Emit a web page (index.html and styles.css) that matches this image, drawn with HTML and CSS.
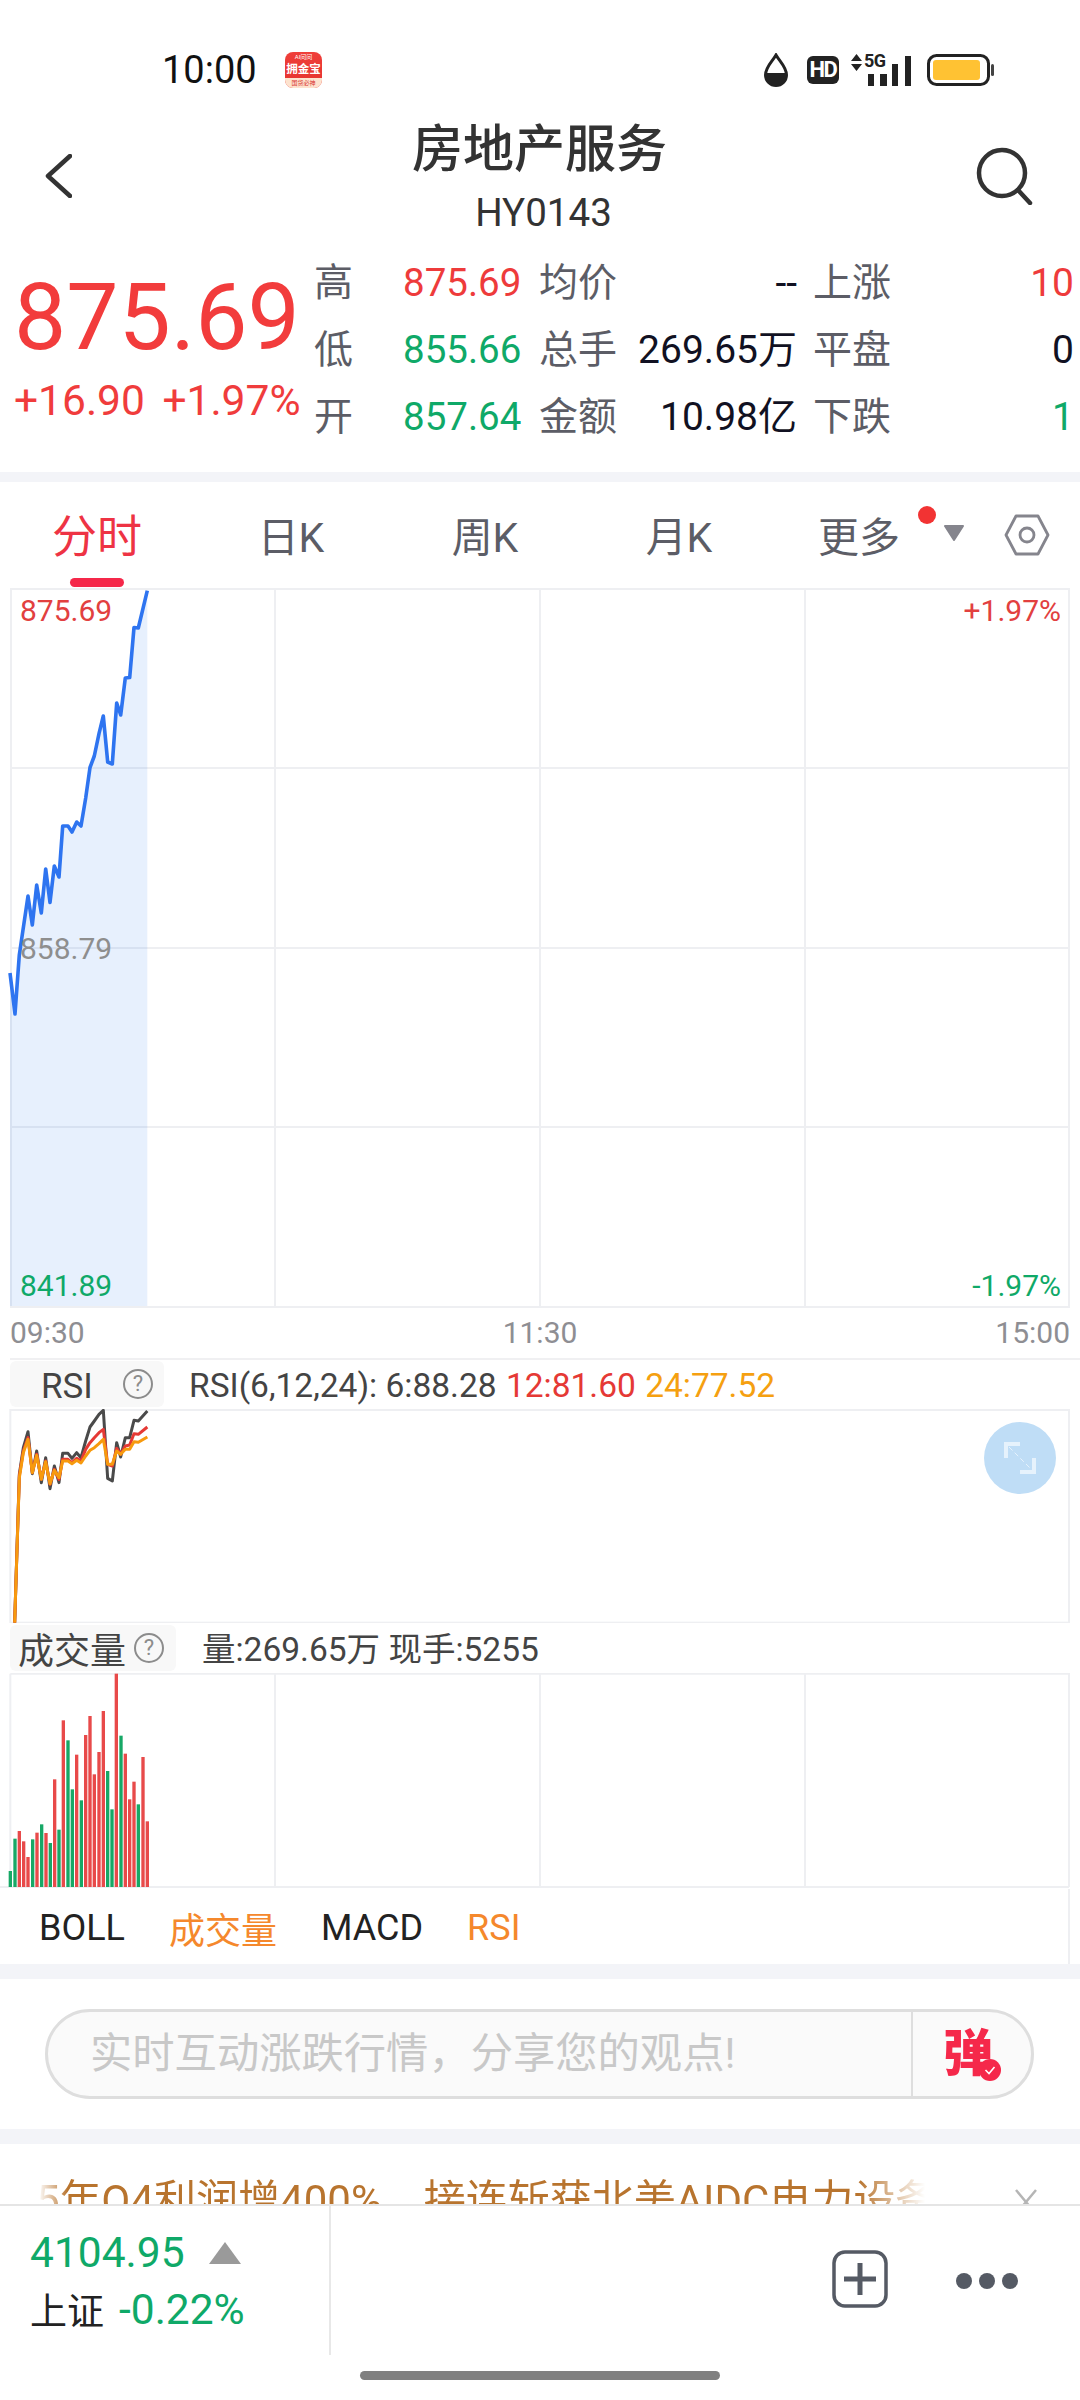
FILE: index.html
```html
<!DOCTYPE html>
<html lang="zh-CN">
<head>
<meta charset="utf-8">
<title>房地产服务</title>
<link rel="stylesheet" href="styles.css">
</head>
<body>
<div class="page">
  <div class="status">
    <span class="time">10:00</span>
    <div class="appicon"><span class="ai">AI问问</span><span class="appname">拥金宝</span><span class="appfoot">国货必神</span></div>
    <div class="sysicons">
      <svg class="drop" width="26" height="34" viewBox="0 0 26 34"><path d="M13 2 C9 9 2.500 14 2.500 22 a10.500 10.500 0 0 0 21 0 C23.500 14 17 9 13 2Z" fill="#fff" stroke="#222" stroke-width="3"/><path d="M2.500 20 h21 v2 a10.500 10.500 0 0 1 -21 0Z" fill="#222"/></svg>
      <span class="hd">HD</span>
      <div class="net">
        <svg class="arrows" width="11" height="17" viewBox="0 0 11 17"><path d="M5.500 0 L11 7 H0Z M5.500 17 L11 10 H0Z" fill="#222"/></svg>
        <span class="fiveg">5G</span>
        <svg class="bars" width="44" height="31" viewBox="0 0 44 31"><path d="M1 19h6v12H1Z M13 19h7v12h-7Z M25 9h6v22h-6Z M38 1h6v30h-6Z" fill="#222"/></svg>
      </div>
      <svg class="battery" width="67" height="32" viewBox="0 0 67 32"><rect x="1.500" y="1.500" width="60" height="29" rx="8" fill="#fff" stroke="#222" stroke-width="3"/><rect x="6" y="6" width="47" height="20" rx="3" fill="#ffc233"/><rect x="64" y="10" width="3" height="12" rx="1.500" fill="#444"/></svg>
    </div>
  </div>

  <header class="head">
    <svg class="back" width="27" height="44" viewBox="0 0 27 44"><path d="M25 2 L3 22 L25 42" fill="none" stroke="#333" stroke-width="4.500" stroke-linecap="round" stroke-linejoin="round"/></svg>
    <div class="titles">
      <h1 class="title">房地产服务</h1>
      <div class="code">HY0143</div>
    </div>
    <svg class="search" width="58" height="58" viewBox="0 0 58 58"><circle cx="26" cy="26" r="23" fill="none" stroke="#333" stroke-width="4.500"/><path d="M42 43 L54 56" fill="none" stroke="#333" stroke-width="4.500" stroke-linecap="round"/></svg>
  </header>

  <section class="quote">
    <div class="price">
      <div class="big">875.69</div>
      <div class="change">+16.90 +1.97%</div>
    </div>
    <div class="qgrid">
      <span class="lb">高</span><span class="up">875.69</span><span class="lb">均价</span><span class="val">--</span><span class="lb lb3">上涨</span><span class="val up">10</span>
      <span class="lb">低</span><span class="down">855.66</span><span class="lb">总手</span><span class="val">269.65万</span><span class="lb lb3">平盘</span><span class="val">0</span>
      <span class="lb">开</span><span class="down">857.64</span><span class="lb">金额</span><span class="val">10.98亿</span><span class="lb lb3">下跌</span><span class="val down">1</span>
    </div>
  </section>

  <div class="band"></div>

  <nav class="tabs">
    <div class="tab active"><span>分时</span><i class="underline"></i></div>
    <div class="tab">日K</div>
    <div class="tab">周K</div>
    <div class="tab">月K</div>
    <div class="tab more">更多<i class="dot"></i><svg class="caret" width="22" height="16" viewBox="0 0 22 16"><path d="M2 1 H20 L11 15Z" fill="#85858d" stroke="#85858d" stroke-width="2" stroke-linejoin="round"/></svg></div>
    <svg class="hex" width="46" height="42" viewBox="0 0 46 42"><path d="M12 2 H34 L44 21 L34 40 H12 L2 21Z" fill="none" stroke="#85858d" stroke-width="2.800" stroke-linejoin="round"/><circle cx="23" cy="21" r="7" fill="none" stroke="#85858d" stroke-width="2.800"/></svg>
  </nav>

  <svg class="chart" width="1080" height="720" viewBox="0 588 1080 720">
    <rect class="frame" x="11" y="589" width="1058" height="718"/>
    <path class="grid" d="M275 589V1307 M540 589V1307 M805 589V1307 M11 768H1069 M11 948H1069 M11 1127H1069"/>
    <polygon class="area" points="10,973 15,1014 19.300,955 28,896 32.300,925 36.700,885 41.300,913 45.700,869 50,902.500 54.300,866 59,877 62.700,826 68,826 72,832 76.700,822 81,826 85.700,798 90,767.500 94.300,756 99,733.600 103.300,716 107.700,762 112.300,764 116.700,703 120.700,715 125.300,678 129.700,677.500 134,627.500 138.300,628 147.300,590.700 147.300,1306 10,1306"/>
    <polyline class="price-line" points="10,973 15,1014 19.300,955 28,896 32.300,925 36.700,885 41.300,913 45.700,869 50,902.500 54.300,866 59,877 62.700,826 68,826 72,832 76.700,822 81,826 85.700,798 90,767.500 94.300,756 99,733.600 103.300,716 107.700,762 112.300,764 116.700,703 120.700,715 125.300,678 129.700,677.500 134,627.500 138.300,628 147.300,590.700"/>
    <text class="axis t-up" x="20" y="621">875.69</text>
    <text class="axis t-mid" x="20" y="959">858.79</text>
    <text class="axis t-down" x="20" y="1296">841.89</text>
    <text class="axis t-up end" x="1061" y="621">+1.97%</text>
    <text class="axis t-down end" x="1061" y="1296">-1.97%</text>
  </svg>

  <div class="timeaxis"><span>09:30</span><span>11:30</span><span>15:00</span></div>

  <div class="ind-head rsi-head">
    <div class="ind-tab rsi-tab"><span class="rsi-name">RSI</span><svg class="help" width="32" height="32" viewBox="0 0 32 32"><circle cx="16" cy="16" r="14" fill="none" stroke="#8c8c8c" stroke-width="2"/><text x="16" y="23" class="help-q">?</text></svg></div>
    <div class="ind-text">RSI(6,12,24): 6:88.28 <span class="c-red">12:81.60</span> <span class="c-orange">24:77.52</span></div>
  </div>

  <div class="rsi-wrap">
    <svg class="rsi" width="1080" height="214" viewBox="0 324 3240 642">
      <rect class="frame-z" x="31" y="327" width="3176" height="638"/>
      <polyline class="rl r-grey" points="44,965 58,520 70,440 84,392 97,518 110,450 124,545 137,470 150,563 163,495 177,545 188,457 204,457 216,472 230,455 243,470 257,420 270,378 283,360 297,340 310,328 323,532 337,540 350,425 362,468 376,410 389,410 402,358 415,360 442,330"/>
      <polyline class="rl r-red" points="44,965 58,525 70,450 84,410 97,515 110,460 124,535 137,480 150,550 163,505 177,535 188,475 204,475 216,485 230,472 243,480 257,445 270,425 283,410 297,395 310,385 323,490 337,495 350,442 362,460 376,435 389,432 402,398 415,400 442,378"/>
      <polyline class="rl r-orange" points="44,965 58,530 70,455 84,415 97,515 110,463 124,535 137,482 150,548 163,508 177,530 188,480 204,480 216,488 230,478 243,486 257,465 270,448 283,440 297,428 310,415 323,490 337,490 350,450 362,460 376,445 389,445 402,422 415,424 442,408"/>
    </svg>
    <div class="expand"><svg width="32" height="32" viewBox="0 0 32 32"><path d="M2 16V2H16 M30 16V30H16" fill="none" stroke="#e6f2fc" stroke-width="4"/><path d="M5 5 L27 27" fill="none" stroke="#e6f2fc" stroke-width="1" stroke-dasharray="5 3"/></svg></div>
  </div>

  <div class="ind-head vol-head">
    <div class="ind-tab vol-tab"><span>成交量</span><svg class="help" width="32" height="32" viewBox="0 0 32 32"><circle cx="16" cy="16" r="14" fill="none" stroke="#8c8c8c" stroke-width="2"/><text x="16" y="23" class="help-q">?</text></svg></div>
    <div class="ind-text">量:269.65万 现手:5255</div>
  </div>

  <svg class="volume" width="1080" height="216" viewBox="0 98 3240 648">
    <path class="grid-z" d="M31 100H3207V740 M31 100V740 M825 100V740 M1620 100V740 M2415 100V740 M0 740H3207"/>
    <g class="v-g"><rect x="26" y="692" width="10" height="48"/><rect x="40" y="595" width="10" height="145"/><rect x="93" y="597" width="10" height="143"/><rect x="120" y="552" width="10" height="188"/><rect x="146" y="608" width="10" height="132"/><rect x="172" y="568" width="10" height="172"/><rect x="199" y="300" width="10" height="440"/><rect x="212" y="447" width="10" height="293"/><rect x="239" y="480" width="10" height="260"/><rect x="318" y="392" width="10" height="348"/><rect x="331" y="507" width="10" height="233"/><rect x="358" y="286" width="10" height="454"/><rect x="410" y="492" width="10" height="248"/></g>
    <g class="v-r"><rect x="53" y="572" width="10" height="168"/><rect x="66" y="603" width="10" height="137"/><rect x="79" y="650" width="10" height="90"/><rect x="106" y="577" width="10" height="163"/><rect x="133" y="578" width="10" height="162"/><rect x="159" y="417" width="10" height="323"/><rect x="185" y="240" width="10" height="500"/><rect x="225" y="343" width="10" height="397"/><rect x="252" y="284" width="10" height="456"/><rect x="265" y="227" width="10" height="513"/><rect x="278" y="402" width="10" height="338"/><rect x="292" y="335" width="10" height="405"/><rect x="305" y="212" width="10" height="528"/><rect x="344" y="100" width="10" height="640"/><rect x="371" y="340" width="10" height="400"/><rect x="384" y="477" width="10" height="263"/><rect x="397" y="424" width="10" height="316"/><rect x="424" y="350" width="10" height="390"/><rect x="437" y="543" width="10" height="197"/></g>
  </svg>

  <div class="indicators">
    <span class="ind">BOLL</span>
    <span class="ind on">成交量</span>
    <span class="ind">MACD</span>
    <span class="ind on">RSI</span>
  </div>

  <div class="band wide"></div>

  <div class="inputrow">
    <div class="pill">
      <div class="placeholder">实时互动涨跌行情，分享您的观点!</div>
      <div class="danmu"><span class="dan">弹</span><svg class="check" width="22" height="22" viewBox="0 0 22 22"><circle cx="11" cy="11" r="11" fill="#f5284a"/><path d="M6.500 11 L10 14.500 L15.500 8" fill="none" stroke="#fff" stroke-width="1.600"/></svg></div>
    </div>
  </div>

  <div class="band wide"></div>

  <div class="ticker">
    <div class="ticker-text">5年Q4利润增400%，接连斩获北美AIDC电力设备</div>
    <svg class="close" width="24" height="28" viewBox="0 0 24 28"><path d="M2 2 L22 26 M22 2 L2 26" fill="none" stroke="#b5b5b5" stroke-width="2.500"/></svg>
  </div>

  <footer class="bottom">
    <div class="bottom-row">
      <div class="index">
        <div class="idx-top"><span class="idx-val">4104.95</span><svg width="32" height="22" viewBox="0 0 32 22"><path d="M16 0 L32 22 H0Z" fill="#9a9a9a"/></svg></div>
        <div class="idx-bot"><span class="idx-name">上证</span><span class="idx-pct">-0.22%</span></div>
      </div>
      <div class="actions">
        <svg class="add" width="56" height="58" viewBox="0 0 56 58"><rect x="2" y="2" width="52" height="54" rx="11" fill="none" stroke="#555a64" stroke-width="3.500"/><path d="M28 13V45 M12 29H44" fill="none" stroke="#555a64" stroke-width="5"/></svg>
        <svg width="64" height="18" viewBox="0 0 64 18"><circle cx="9" cy="9" r="8" fill="#555a64"/><circle cx="32" cy="9" r="8" fill="#555a64"/><circle cx="55" cy="9" r="8" fill="#555a64"/></svg>
      </div>
    </div>
    <div class="homebar"></div>
  </footer>
</div>
</body>
</html>
```
FILE: styles.css
```css
* { box-sizing: border-box; }
html, body { margin: 0; padding: 0; background: #fff; }
.page {
  width: 1080px;
  height: 2400px;
  overflow: hidden;
  font-family: Roboto, "Noto Sans CJK SC", sans-serif;
  color: #111;
  display: flex;
  flex-direction: column;
}

/* status bar */
.status { height: 100px; flex: none; padding: 40px 86px 0 162px; display: flex; align-items: center; }
.time { font-size: 38px; line-height: 60px; color: #111; width: 123px; }
.appicon {
  width: 37px; height: 36px; border-radius: 8px;
  background: linear-gradient(#ef3f3a, #e5322e);
  display: flex; flex-direction: column; align-items: center; color: #fff;
}
.ai { font-size: 6px; line-height: 9px; height: 9px; }
.appname { font-size: 11.500px; line-height: 17px; height: 17px; font-weight: 700; white-space: nowrap; }
.appfoot { font-size: 6px; line-height: 10px; height: 10px; width: 100%; text-align: center; background: #fde3cf; color: #d9352f; white-space: nowrap; border-radius: 0 0 8px 8px; }
.sysicons { margin-left: auto; display: flex; align-items: center; }
.drop { margin-right: 18px; }
.hd {
  width: 32px; height: 28px; border-radius: 6px; background: #222; color: #fff;
  font-size: 22px; line-height: 28px; font-weight: 700; text-align: center; letter-spacing: -1.500px;
  margin-right: 12px;
}
.net { position: relative; width: 60px; height: 32px; margin-right: 16px; }
.arrows { position: absolute; left: 0; top: 0; }
.fiveg { position: absolute; left: 13px; top: -2px; font-size: 18px; line-height: 18px; font-weight: 700; color: #222; letter-spacing: -.5px; }
.bars { position: absolute; right: 0; bottom: 0; }

/* header */
.head { height: 140px; flex: none; padding: 0 46px 0 45px; display: grid; grid-template-columns: 1fr auto 1fr; align-items: center; }
.back { margin-top: 12px; }
.search { justify-self: end; margin-top: 11px; }
.titles { text-align: center; padding-top: 12px; }
.title { margin: 0; font-size: 51px; line-height: 68px; font-weight: 500; color: #333; }
.code { font-size: 38.500px; line-height: 48px; color: #333; margin-top: 5px; padding-left: 8px; }

/* quote */
.quote { height: 232px; flex: none; display: flex; padding-left: 14px; }
.price { width: 301px; flex: none; padding-top: 24px; }
.big { font-size: 93px; line-height: 108px; color: #f23c3c; white-space: nowrap; }
.change { font-size: 42.500px; line-height: 48px; color: #f03c3c; white-space: nowrap; margin-top: 5px; word-spacing: 7px; }
.qgrid {
  display: grid; grid-template-columns: 89px 136px 90px 168px 117px 160px; grid-auto-rows: 67px;
  padding-top: 9px; align-items: center;
  font-size: 38.500px; line-height: 66px; align-content: start; white-space: nowrap;
  margin-left: -1px;
}
.lb { font-size: 39px; color: #5c5d66; }
.lb3 { padding-left: 16px; }
.up { color: #ee3b3b; }
.down { color: #0fa968; }
.val { text-align: right; color: #111122; font-size: 39px; }
.val.up { color: #ee3b3b; }
.val.down { color: #0fa968; }

.band { height: 10px; flex: none; background: #f3f4f8; }
.band.wide { height: 15px; }

/* tabs */
.tabs { height: 106px; flex: none; display: flex; align-items: flex-start; position: relative; }
.tab { width: 194px; padding-top: 31px; text-align: center; font-size: 41px; line-height: 50px; color: #5c5d66; display: flex; flex-direction: column; align-items: center; }
.tab.active { color: #ee3344; font-size: 45px; }
.underline { display: block; width: 54px; height: 9px; border-radius: 5px; background: #f5284a; margin-top: 15px; }
.tab.more { width: 228px; padding-left: 42px; align-items: flex-start; position: relative; font-size: 41px; }
.dot { position: absolute; left: 142px; top: 24px; width: 18px; height: 18px; border-radius: 50%; background: #f23333; }
.caret { position: absolute; left: 167px; top: 43px; }
.hex { margin-top: 32px; }

/* main chart */
.chart { display: block; flex: none; }
.frame { fill: #fff; stroke: #eeeff2; stroke-width: 2; }
.grid { fill: none; stroke: #eeeff2; stroke-width: 2; }
.area { fill: rgba(40, 115, 240, .11); }
.price-line { fill: none; stroke: #2e74f0; stroke-width: 3.600; stroke-linejoin: round; }
.axis { font-size: 30px; font-family: Roboto, sans-serif; }
.end { text-anchor: end; }
.t-up { fill: #e2403f; }
.t-mid { fill: #8e8e8e; }
.t-down { fill: #0fa968; }

.timeaxis { height: 50px; flex: none; padding: 0 10px; display: flex; justify-content: space-between; align-items: center; font-size: 30px; line-height: 50px; color: #8e8e93; }

/* indicator heads */
.ind-head { flex: none; display: flex; align-items: center; margin-left: 10px; }
.rsi-head { height: 51px; border-top: 2px solid #f0f0f2; padding-top: 1px; align-items: flex-start; }
.vol-head { height: 51px; padding-top: 3px; align-items: flex-start; }
.ind-tab { background: #f8f8f8; border-radius: 6px; display: flex; align-items: center; height: 46px; color: #444; }
.rsi-tab { width: 154px; padding-left: 31px; font-size: 35px; gap: 29px; line-height: 50px; }
.rsi-name { padding-top: 5px; }
.vol-tab { width: 166px; padding-left: 8px; font-size: 36px; gap: 7px; }
.help { flex: none; }
.help-q { font-size: 22px; fill: #8c8c8c; text-anchor: middle; font-family: Roboto, sans-serif; }
.ind-text { font-size: 33.500px; line-height: 50px; color: #444; white-space: nowrap; margin-left: 25px; }
.vol-head .ind-text { margin-left: 26px; }
.c-red { color: #e53935; margin-left: 1px; }
.c-orange { color: #f5a010; margin-left: 1px; }

/* rsi */
.rsi-wrap { position: relative; height: 213px; flex: none; }
.rsi { display: block; }
.frame-z { fill: none; stroke: #eeeff2; stroke-width: 6; }
.rl { fill: none; stroke-width: 9; stroke-linejoin: round; }
.r-grey { stroke: #4a4a4a; }
.r-red { stroke: #e53935; }
.r-orange { stroke: #f79a0e; }
.expand { position: absolute; left: 984px; top: 13px; width: 72px; height: 72px; border-radius: 50%; background: #bfddf6; display: flex; align-items: center; justify-content: center; }

/* volume */
.volume { display: block; flex: none; }
.grid-z { fill: none; stroke: #eeeff2; stroke-width: 6; }
.v-g { fill: #17a866; }
.v-r { fill: #e84a4a; }

.indicators { height: 75px; flex: none; display: flex; align-items: center; padding: 2px 0 0 39px; font-size: 36px; gap: 44px; color: #222; border-right: 2px solid #eeeff2; width: 1070px; }
.ind.on { color: #f5882c; }

/* input */
.inputrow { height: 150px; flex: none; padding: 30px 46px 30px 45px; }
.pill { height: 90px; border: 3px solid #dedede; border-radius: 45px; background: #fafafa; display: flex; align-items: center; padding-left: 42px; }
.placeholder { width: 823px; font-size: 42.300px; line-height: 84px; color: #c8c8c8; white-space: nowrap; height: 84px; border-right: 2px solid #dedede; }
.danmu { position: relative; margin-left: 30px; }
.dan { font-size: 50px; line-height: 60px; font-weight: 900; color: #f5284a; display: block; }
.check { position: absolute; right: -8px; bottom: 3px; }

/* ticker */
.ticker { height: 60px; flex: none; overflow: hidden; display: flex; align-items: flex-start; padding-left: 38px; }
.ticker-text {
  width: 887px; margin-top: 27px; font-size: 42px; line-height: 60px; color: #b8742e; white-space: nowrap; overflow: hidden;
  text-indent: -2px;
  -webkit-mask-image: linear-gradient(90deg, transparent, #000 30px, #000 820px, transparent);
  mask-image: linear-gradient(90deg, transparent, #000 30px, #000 820px, transparent);
}
.close { margin: 44px 0 0 89px; flex: none; }

/* bottom bar */
.bottom { height: 197px; flex: none; border-top: 2px solid #e5e5e5; display: flex; flex-direction: column; align-items: center; background: #fff; }
.bottom-row { width: 100%; height: 149px; display: flex; align-items: stretch; }
.index { width: 331px; border-right: 2px solid #e8e8e8; padding: 23px 0 0 30px; }
.idx-top { display: flex; align-items: center; height: 48px; gap: 24px; }
.idx-val { font-size: 42.500px; line-height: 48px; color: #0fa968; }
.idx-bot { display: flex; align-items: center; height: 52px; margin-top: 6px; gap: 15px; }
.idx-name { font-size: 37px; color: #222; }
.idx-pct { font-size: 42.500px; color: #0fa968; }
.actions { margin-left: auto; padding-right: 61px; display: flex; align-items: center; gap: 67px; }
.add { margin-top: -3px; }
.homebar { width: 360px; height: 9px; border-radius: 5px; background: #808080; margin-top: 16px; }
```
